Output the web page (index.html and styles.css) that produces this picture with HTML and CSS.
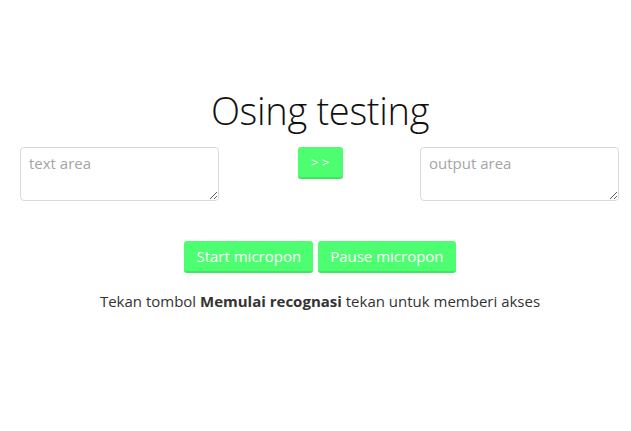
FILE: index.html
```html
<!DOCTYPE html>
<html>
<head>
<meta charset="utf-8">
<link rel="stylesheet" href="styles.css">
</head>
<body>
<div class="page">
  <h1 class="title">Osing testing</h1>
  <div class="row">
    <div class="col"><textarea class="area" placeholder="text area"></textarea></div>
    <div class="col center"><button class="btn btn-small">&gt; &gt;</button></div>
    <div class="col"><textarea class="area" placeholder="output area"></textarea></div>
  </div>
  <div class="actions">
    <button class="btn">Start micropon</button>
    <button class="btn">Pause micropon</button>
  </div>
  <p class="note">Tekan tombol <b>Memulai recognasi</b> tekan untuk memberi akses</p>
</div>
</body>
</html>
```
FILE: styles.css
```css
html, body { margin: 0; padding: 0; background: #fff; }
body { font-family: "Open Sans", "Noto Sans", sans-serif; color: #333; }
.page { width: 600px; margin-left: 20px; padding-top: 84px; }
.title { margin: 0; text-align: center; font-weight: 300; font-size: 38px; line-height: 52px; color: #111; letter-spacing: -0.3px; }
.row { display: grid; grid-template-columns: 200px 200px 200px; margin-top: 11px; }
.col { display: flex; }
.center { justify-content: center; align-items: flex-start; }
.area { box-sizing: border-box; width: 199px; height: 54px; border: 1px solid #d9d9d9; border-radius: 4px; padding: 5px 8px; font-family: inherit; font-size: 15px; color: #555; resize: vertical; }
.area::placeholder { color: #a5a5a5; }
.btn { box-sizing: border-box; background: #4dff70; color: #fff; border: none; border-bottom: 2px solid #3fe660; border-radius: 3px; font-family: inherit; font-size: 15px; height: 32px; padding: 0 12px; cursor: pointer; }
.btn-small { width: 45px; height: 32px; font-size: 13px; padding: 0; }
.actions { display: flex; justify-content: center; gap: 5px; margin-top: 40px; }
.note { margin: 18px 0 0; text-align: center; font-size: 15px; color: #333; }
.note b { font-weight: 700; }
```
